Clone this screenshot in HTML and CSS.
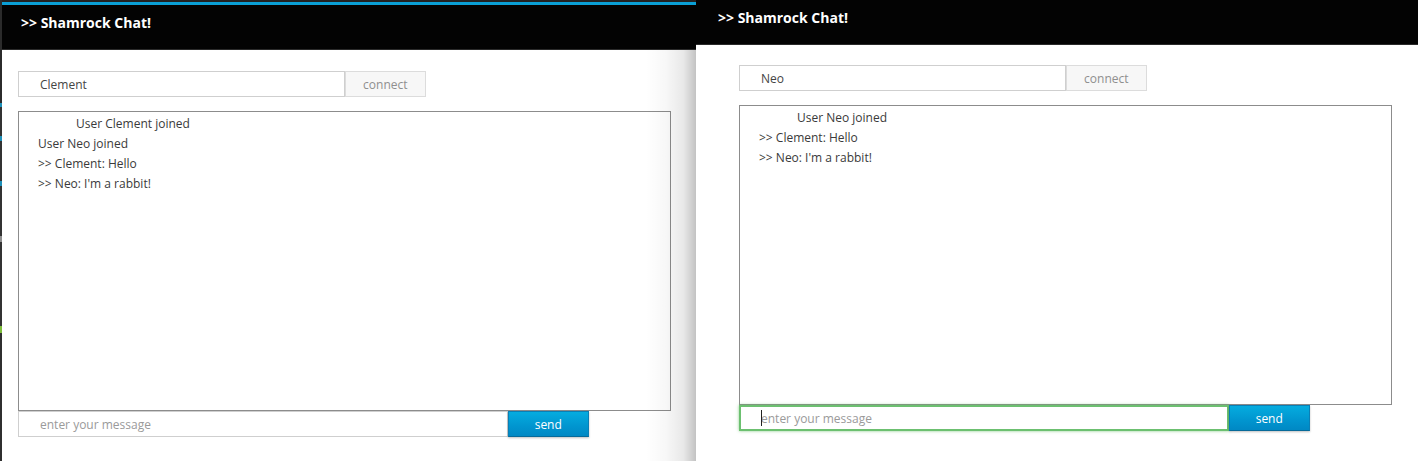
FILE: index.html
```html
<!DOCTYPE html>
<html>
<head>
<meta charset="utf-8">
<title>Shamrock Chat</title>
<link rel="stylesheet" href="styles.css">
</head>
<body>
<div class="desk">
  <div class="edge"></div>
  <section class="win win-left">
    <header class="bar">&gt;&gt; Shamrock Chat!</header>
    <main class="app">
      <div class="row-connect">
        <input class="name" type="text" value="Clement">
        <button class="connect">connect</button>
      </div>
      <div class="log">
        <div class="msg first">User Clement joined</div>
        <div class="msg">User Neo joined</div>
        <div class="msg">&gt;&gt; Clement: Hello</div>
        <div class="msg">&gt;&gt; Neo: I'm a rabbit!</div>
      </div>
      <div class="row-send">
        <input class="message" type="text" placeholder="enter your message">
        <button class="send">send</button>
      </div>
    </main>
    <div class="shade"></div>
  </section>
  <section class="win win-right">
    <header class="bar">&gt;&gt; Shamrock Chat!</header>
    <main class="app">
      <div class="row-connect">
        <input class="name" type="text" value="Neo">
        <button class="connect">connect</button>
      </div>
      <div class="log">
        <div class="msg first">User Neo joined</div>
        <div class="msg">&gt;&gt; Clement: Hello</div>
        <div class="msg">&gt;&gt; Neo: I'm a rabbit!</div>
      </div>
      <div class="row-send">
        <input class="message focused" type="text" placeholder="enter your message">
        <span class="caret"></span>
        <button class="send">send</button>
      </div>
    </main>
  </section>
</div>
</body>
</html>
```

FILE: styles.css
```css
* { box-sizing: border-box; }

html, body {
  margin: 0;
  padding: 0;
  height: 100%;
  background: #ffffff;
  font-family: "Open Sans", "DejaVu Sans", sans-serif;
  overflow: hidden;
}

.desk {
  display: flex;
  height: 461px;
  width: 1418px;
}

.edge {
  width: 2px;
  flex: none;
  background:
    linear-gradient(to bottom,
      #2b2b2b 0, #2b2b2b 103px,
      #1d8fb8 103px, #1d8fb8 107px,
      #333 107px, #333 136px,
      #1d8fb8 136px, #1d8fb8 141px,
      #333 141px, #333 181px,
      #1d8fb8 181px, #1d8fb8 186px,
      #333 186px, #333 236px,
      #8d8d8d 236px, #8d8d8d 242px,
      #333 242px, #333 326px,
      #7dbd3a 326px, #7dbd3a 333px,
      #2f2f2f 333px, #2f2f2f 100%);
}

.win {
  display: flex;
  flex-direction: column;
  background: #ffffff;
}

.win-left {
  position: relative;
  width: 694px;
  flex: none;
  border-top: 2px solid #222;
}

.win-right {
  flex: 1;
  min-width: 0;
}

.bar {
  background: #030303;
  color: #ffffff;
  font-weight: 700;
  font-size: 14px;
  line-height: 19px;
  padding: 7px 19px 0;
  border-bottom: 1px solid #2a2a2a;
}

.win-left .bar {
  height: 48px;
  padding-top: 8px;
  border-top: 3px solid #0a9fd5;
}

.win-right .bar {
  height: 45px;
  padding-left: 22px;
  padding-top: 8px;
}

.app {
  padding-top: 20px;
  width: 653px;
}

.win-left .app {
  margin-left: 16px;
  padding-top: 21px;
}

.win-right .app {
  margin-left: 43px;
}

.row-connect,
.row-send {
  display: flex;
  height: 26px;
  position: relative;
}

input {
  font-family: "Open Sans", "DejaVu Sans", sans-serif;
  font-size: 12px;
  height: 26px;
  margin: 0;
  outline: none;
  background: #ffffff;
  border: 1px solid #cfcfcf;
  padding: 0 21px;
  color: #444;
}

input::placeholder {
  color: #9a9a9a;
}

.name {
  width: 50%;
}

.connect {
  width: 12.5%;
  height: 26px;
  margin: 0;
  border: 1px solid #dcdcdc;
  background: #f7f7f7;
  color: #8f8f8f;
  font-family: "Open Sans", "DejaVu Sans", sans-serif;
  font-size: 12px;
  padding: 0;
}

.log {
  margin-top: 14px;
  height: 300px;
  border: 1px solid #8c8c8c;
  padding: 2px 19px;
  font-size: 12px;
  color: #3a3a3a;
}

.msg {
  line-height: 20px;
}

.msg.first {
  padding-left: 38px;
}

.message {
  width: 75%;
}

.message.focused {
  border: 2px solid #6cc070;
  box-shadow: 0 0 3px rgba(92, 184, 92, 0.7);
  padding-left: 20px;
}

.caret {
  position: absolute;
  left: 22px;
  top: 5px;
  width: 1px;
  height: 16px;
  background: #222;
}

.send {
  width: 81px;
  height: 26px;
  margin: 0;
  padding: 0;
  border: 1px solid #0a7fb5;
  border-bottom-color: #076a99;
  background: linear-gradient(to bottom, #05acdf 0%, #0195cf 60%, #0088c4 100%);
  color: #ffffff;
  font-family: "Open Sans", "DejaVu Sans", sans-serif;
  font-size: 12px;
  box-shadow: 0 1px 2px rgba(0, 0, 0, 0.25);
}

.shade {
  position: absolute;
  top: 48px;
  right: 0;
  bottom: 0;
  width: 50px;
  pointer-events: none;
  background: linear-gradient(to right,
    rgba(0, 0, 0, 0) 0%,
    rgba(0, 0, 0, 0.03) 40%,
    rgba(0, 0, 0, 0.09) 75%,
    rgba(0, 0, 0, 0.24) 100%);
}
```
